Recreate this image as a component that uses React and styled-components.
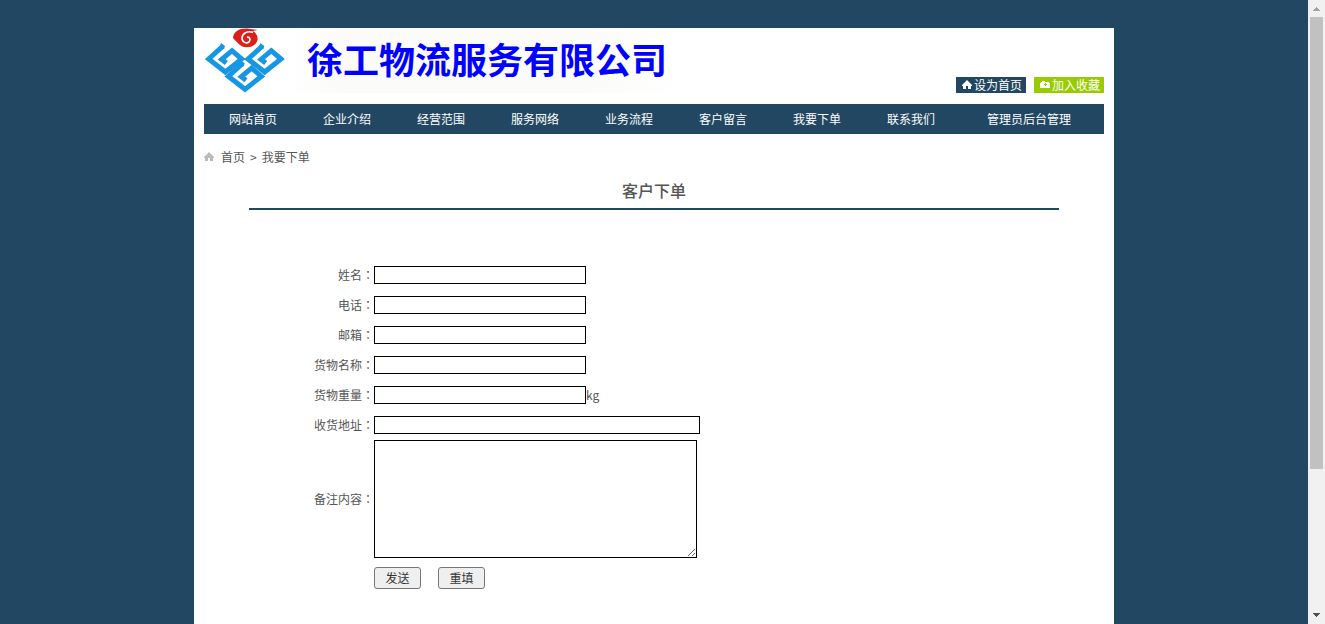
import React from "react";
import styled, { createGlobalStyle } from "styled-components";

const navy = "#224762";

const GlobalStyle = createGlobalStyle`
  * { box-sizing: border-box; }
  body {
    margin: 0;
    background: ${navy};
    color: #555;
    font: 12px/24px "Noto Sans CJK SC", sans-serif;
  }
  a { color: inherit; text-decoration: none; }
`;

const Screen = styled.div`
  display: flex;
  align-items: flex-start;
  min-height: 100vh;
`;

const Main = styled.div`
  flex: 1;
  padding-top: 28px;
`;

const Page = styled.div`
  max-width: 920px;
  min-height: calc(100vh - 28px);
  margin: 0 auto;
  padding: 0 10px;
  background: #fff;
`;

const Header = styled.header`
  display: flex;
  justify-content: space-between;
  align-items: flex-start;
  height: 76px;
`;

const Brand = styled.div`
  display: flex;
  gap: 22px;
  padding-right: 16px;
  background: linear-gradient(90deg, #fff 80px, #fbfbf9 140px, #fbfbf9 380px, #fff);
  height: 65px;
`;

const Logo = styled.svg`
  width: 80px;
  height: 66px;
  margin-left: 1px;
`;

const Company = styled.h1`
  margin: 0;
  color: #00f;
  font-size: 36px;
  line-height: 60px;
  font-weight: 700;
`;

const Quick = styled.div`
  display: flex;
  gap: 8px;
  align-self: flex-end;
  padding-bottom: 11px;
`;

const QuickLink = styled.a`
  display: flex;
  align-items: center;
  gap: 2px;
  width: 70px;
  height: 16px;
  padding-left: 6px;
  background: ${(p) => p.$color};
  color: #fff;
  line-height: 16px;
  white-space: nowrap;
`;

const Nav = styled.nav`
  display: flex;
  height: 30px;
  padding: 0 4px 0 2px;
  background: ${navy};
`;

const NavLink = styled.a`
  flex: ${(p) => (p.$wide ? "1" : "0 0 94px")};
  color: #fff;
  line-height: 30px;
  text-align: center;
`;

const Crumbs = styled.div`
  display: flex;
  align-items: center;
  gap: 5px;
  height: 24px;
  margin-top: 11px;
`;

const Icon = styled.svg`
  flex: none;
  width: 10px;
  height: 10px;
`;

const HomeLink = styled.a`
  display: flex;
  align-items: center;
  gap: 7px;
`;

const Content = styled.main`
  margin: 0 45px;
`;

const Title = styled.h2`
  margin: 0 0 50px;
  height: 41px;
  border-bottom: 2px solid ${navy};
  font-size: 16px;
  font-weight: 500;
  line-height: 42px;
  text-align: center;
`;

const Row = styled.div`
  display: grid;
  grid-template-columns: 125px 1fr;
  align-items: center;
  min-height: 30px;
`;

const Label = styled.label`
  text-align: right;
`;

const Colon = styled.span`
  font-family: "Noto Sans CJK TC", sans-serif;
`;

const Field = styled.div`
  display: flex;
  align-items: center;
`;

const TextInput = styled.input`
  width: ${(p) => (p.$long ? "326px" : "212px")};
  height: 18px;
  padding: 0 2px;
  border: 1px solid #000;
  background: #fff;
  font: inherit;
  line-height: 16px;
`;

const Remarks = styled.textarea`
  width: 323px;
  height: 118px;
  border: 1px solid #000;
  background: #fff;
  font: inherit;
`;

const Actions = styled.div`
  display: flex;
  gap: 17px;
  padding: 9px 0 35px 125px;
`;

const Button = styled.button`
  width: 47px;
  height: 22px;
  padding: 0;
  border: 1px solid #767676;
  border-radius: 3px;
  background: #efefef;
  color: #333;
  font: inherit;
  line-height: 20px;
`;

const ScrollBar = styled.div`
  position: sticky;
  top: 0;
  display: flex;
  flex-direction: column;
  align-items: center;
  width: 17px;
  height: 100vh;
  background: #f1f1f1;
`;

const Arrow = styled.svg`
  width: 17px;
  height: 17px;
`;

const Track = styled.div`
  flex: 1;
  width: 13px;
`;

const Thumb = styled.div`
  height: 452px;
  max-height: 77%;
  background: #c1c1c1;
`;

const links = ["网站首页", "企业介绍", "经营范围", "服务网络", "业务流程", "客户留言", "我要下单", "联系我们", "管理员后台管理"];

const fields = [
  { id: "name", label: "姓名" },
  { id: "phone", label: "电话" },
  { id: "mail", label: "邮箱" },
  { id: "goods", label: "货物名称" },
  { id: "weight", label: "货物重量", unit: "kg" },
  { id: "address", label: "收货地址", long: true },
];

const hook = "M-8 -36 L-50 2 L0 41 L49 2 L20 -23 L-11 3 L3 14";

const CompanyLogo = () => (
  <Logo viewBox="0 0 240 198" aria-hidden="true">
    <g fill="none" stroke="#1797e3" strokeWidth="15">
      <path d={hook} transform="translate(61 91)" />
      <path d={hook} transform="translate(179 91)" />
      <path d={hook} transform="translate(120 143)" />
    </g>
    <g fill="#1797e3">
      <path d="M44 56 L48 45 L60 54 L57 64Z" />
      <path d="M162 56 L166 45 L178 54 L175 64Z" />
      <path d="M103 108 L107 97 L119 106 L116 116Z" />
    </g>
    <path d="M84 30 C86 10 104 0 130 2 L158 6 L144 9 C158 18 163 34 152 47 C140 60 116 61 104 50 Q92 39 84 30Z" fill="#dc2018" />
    <path d="M144 13 C127 8 112 15 111 30 C111 43 124 48 132 42 C139 35 134 26 126 28" fill="none" stroke="#fff" strokeWidth="5" />
  </Logo>
);

const House = ({ fill }) => (
  <Icon viewBox="0 0 10 10" aria-hidden="true">
    <path d="M5 0 L10 5 V6 H9 V9 H6 V6 H4 V9 H1 V6 H0 V5Z" fill={fill} />
  </Icon>
);

const Camera = () => (
  <Icon viewBox="0 0 10 10" aria-hidden="true">
    <path d="M0 3h1V2h1V1h3v1h4v1h1v5H0zM5 3v1H4v1h1v1h1V5h1V4H6V3z" fill="#fff" fillRule="evenodd" />
  </Icon>
);

export default function App() {
  return (
    <>
      <GlobalStyle />
      <Screen>
        <Main>
          <Page>
            <Header>
              <Brand>
                <CompanyLogo />
                <Company>徐工物流服务有限公司</Company>
              </Brand>
              <Quick>
                <QuickLink href="#home" $color={navy}><House fill="#fff" />设为首页</QuickLink>
                <QuickLink href="#favorite" $color="#9c0"><Camera />加入收藏</QuickLink>
              </Quick>
            </Header>
            <Nav>
              {links.map((text, i) => (
                <NavLink key={text} href="#" $wide={i === links.length - 1}>{text}</NavLink>
              ))}
            </Nav>
            <Crumbs>
              <HomeLink href="#"><House fill="#bbb" />首页</HomeLink>
              <span>&gt;</span>
              <span>我要下单</span>
            </Crumbs>
            <Content>
              <Title>客户下单</Title>
              <form onSubmit={(e) => e.preventDefault()}>
                {fields.map((f) => (
                  <Row key={f.id}>
                    <Label htmlFor={f.id}>{f.label}<Colon>：</Colon></Label>
                    <Field>
                      <TextInput id={f.id} type="text" $long={f.long} />
                      {f.unit}
                    </Field>
                  </Row>
                ))}
                <Row>
                  <Label htmlFor="remarks">备注内容<Colon>：</Colon></Label>
                  <Field><Remarks id="remarks" /></Field>
                </Row>
                <Actions>
                  <Button type="submit">发送</Button>
                  <Button type="reset">重填</Button>
                </Actions>
              </form>
            </Content>
          </Page>
        </Main>
        <ScrollBar aria-hidden="true">
          <Arrow viewBox="0 0 17 17"><path d="M8 7h1v1h1v1h1v1h1v1H5v-1h1V9h1V8h1z" fill="#a3a3a3" /></Arrow>
          <Track><Thumb /></Track>
          <Arrow viewBox="0 0 17 17"><path d="M5 6h7v1h-1v1h-1v1H9v1H8V9H7V8H6V7H5z" fill="#505050" /></Arrow>
        </ScrollBar>
      </Screen>
    </>
  );
}
